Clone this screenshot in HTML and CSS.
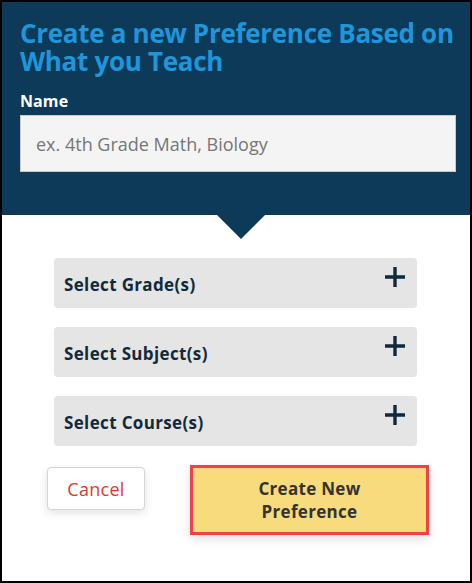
FILE: index.html
```html
<!DOCTYPE html>
<html>
<head>
<meta charset="utf-8">
<link rel="stylesheet" href="styles.css">
</head>
<body>
<div class="frame">
  <div class="header">
    <h1 class="title">Create a new Preference Based on What you Teach</h1>
    <label class="label">Name</label>
    <div class="input">ex. 4th Grade Math, Biology</div>
    <div class="arrow"></div>
  </div>
  <div class="body">
    <div class="acc"><span>Select Grade(s)</span><svg class="plus" viewBox="0 0 22 22"><path d="M11 1v20M1 11h20" stroke="#0e2a3e" stroke-width="3.4"/></svg></div>
    <div class="acc"><span>Select Subject(s)</span><svg class="plus" viewBox="0 0 22 22"><path d="M11 1v20M1 11h20" stroke="#0e2a3e" stroke-width="3.4"/></svg></div>
    <div class="acc"><span>Select Course(s)</span><svg class="plus" viewBox="0 0 22 22"><path d="M11 1v20M1 11h20" stroke="#0e2a3e" stroke-width="3.4"/></svg></div>
    <div class="actions">
      <div class="btn-cancel">Cancel</div>
      <div class="btn-create">Create New<br>Preference</div>
    </div>
  </div>
</div>
</body>
</html>
```
FILE: styles.css
```css
* { box-sizing: border-box; }
html, body { margin: 0; padding: 0; background: #fff; }
body { font-family: "Open Sans", "Lato", sans-serif; }
.frame {
  width: 472px;
  height: 583px;
  border: 2px solid #000;
  display: flex;
  flex-direction: column;
  background: #fff;
}
.header {
  position: relative;
  background: #0c3a58;
  padding: 17px 10px 0 18px;
  height: 213px;
  flex-shrink: 0;
}
.title {
  margin: 0;
  color: #1e96db;
  font-size: 26px;
  font-weight: 700;
  line-height: 28px;
  letter-spacing: -0.3px;
}
.label {
  display: block;
  margin-top: 16px;
  color: #fff;
  font-weight: 700;
  font-size: 16px;
  line-height: 20px;
  letter-spacing: 0.1px;
}
.input {
  margin-top: 4px;
  width: 436px;
  height: 57px;
  background: #f4f4f4;
  border: 1px solid #c9c9c9;
  padding: 0 15px;
  display: flex;
  align-items: center;
  color: #767676;
  font-size: 18px;
}
.arrow {
  position: absolute;
  left: 215px;
  bottom: -24px;
  width: 0;
  height: 0;
  border-left: 24px solid transparent;
  border-right: 24px solid transparent;
  border-top: 24px solid #0c3a58;
}
.body {
  padding: 43px 0 0 52px;
}
.acc {
  width: 363px;
  height: 50px;
  background: #e5e5e5;
  border-radius: 4px;
  margin-bottom: 19px;
  display: flex;
  justify-content: space-between;
  align-items: flex-start;
  padding: 0 11px 0 10px;
}
.acc span {
  color: #12293a;
  font-weight: 700;
  font-size: 17px;
  line-height: 23px;
  margin-top: 15px;
  letter-spacing: 0.35px;
}
.plus {
  width: 22px;
  height: 22px;
  margin-top: 8px;
}
.actions {
  display: flex;
  align-items: flex-start;
  margin-left: -7px;
  margin-top: 1px;
}
.btn-cancel {
  margin-top: 2px;
  width: 98px;
  height: 43px;
  border: 1px solid #d4d4d4;
  border-radius: 4px;
  background: #fff;
  box-shadow: 0 3px 8px rgba(0,0,0,0.12);
  color: #e0392b;
  font-size: 18px;
  letter-spacing: 0.3px;
  display: flex;
  align-items: center;
  justify-content: center;
}
.btn-create {
  margin-left: 45px;
  width: 239px;
  height: 70px;
  background: #f8db7c;
  border: 3px solid #f04146;
  box-shadow: 0 4px 10px rgba(0,0,0,0.12);
  color: #333;
  font-weight: 700;
  font-size: 17px;
  line-height: 23px;
  letter-spacing: 0.3px;
  text-align: center;
  display: flex;
  align-items: center;
  justify-content: center;
}
```
